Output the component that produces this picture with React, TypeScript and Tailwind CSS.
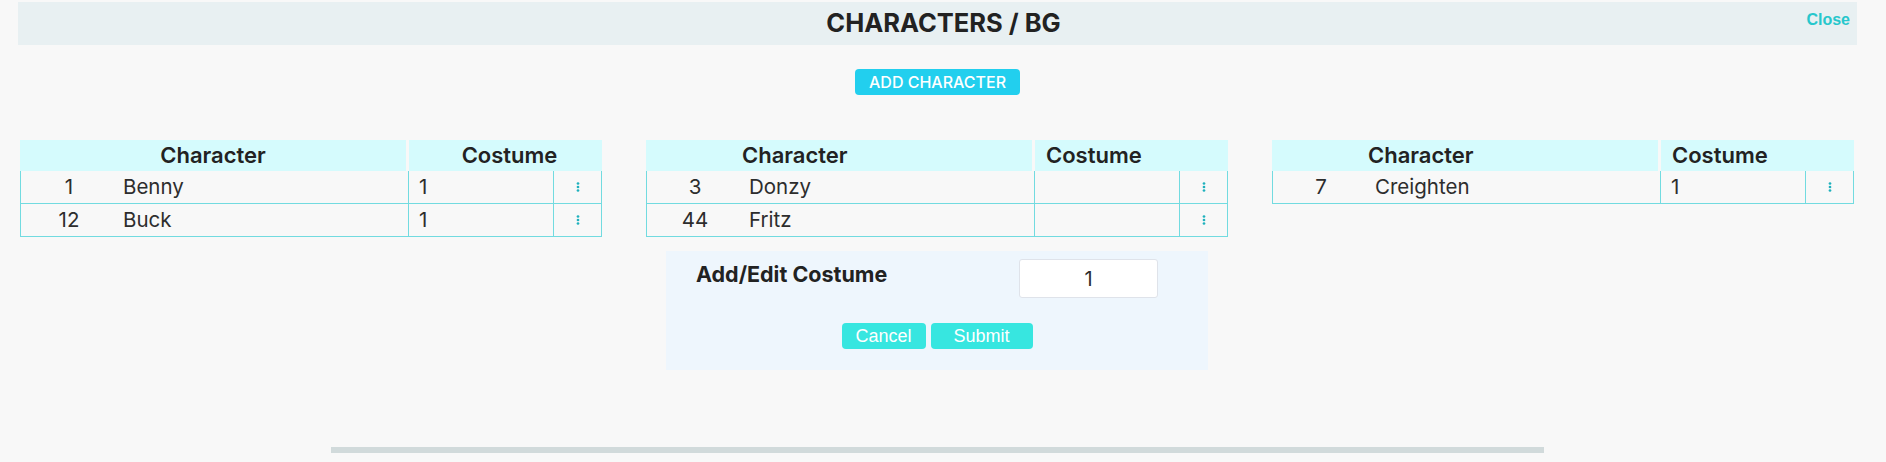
type Row = { num: string; name: string; costume: string }

const tables: { rows: Row[]; centered: boolean }[] = [
  {
    centered: true,
    rows: [
      { num: "1", name: "Benny", costume: "1" },
      { num: "12", name: "Buck", costume: "1" },
    ],
  },
  {
    centered: false,
    rows: [
      { num: "3", name: "Donzy", costume: "" },
      { num: "44", name: "Fritz", costume: "" },
    ],
  },
  {
    centered: false,
    rows: [{ num: "7", name: "Creighten", costume: "1" }],
  },
]

const Dots = () => (
  <svg width="4" height="10" viewBox="0 0 4 10" className="block">
    <circle cx="2" cy="1.5" r="1.35" fill="#1fb1bd" />
    <circle cx="2" cy="5" r="1.35" fill="#1fb1bd" />
    <circle cx="2" cy="8.5" r="1.35" fill="#1fb1bd" />
  </svg>
)

const CharTable = ({ rows, centered }: { rows: Row[]; centered: boolean }) => {
  return (
    <div className="flex flex-col w-[582px]">
      <div className="flex gap-[3px] h-[31px] text-[22px] font-semibold text-[#222]">
        <div
          className={
            centered
              ? "w-[386px] bg-[#d5fbfd] flex items-center justify-center"
              : "w-[386px] bg-[#d5fbfd] flex items-center pl-[96px]"
          }
        >
          Character
        </div>
        <div
          className={
            centered
              ? "flex-1 bg-[#d5fbfd] flex items-center justify-center pl-[8px]"
              : "flex-1 bg-[#d5fbfd] flex items-center pl-[11px]"
          }
        >
          Costume
        </div>
      </div>
      {rows.map((r) => (
        <div
          key={r.num}
          className="flex h-[33px] border-x border-b border-[#72dbe0] text-[20.5px] text-[#2d2d2d]"
        >
          <div className="w-[96px] flex items-center justify-center">{r.num}</div>
          <div className="w-[291px] flex items-center pl-[6px]">{r.name}</div>
          <div className="w-[145px] border-l border-[#72dbe0] flex items-center pl-[10px]">
            {r.costume}
          </div>
          <div className="flex-1 border-l border-[#72dbe0] flex items-center justify-center">
            <Dots />
          </div>
        </div>
      ))}
    </div>
  )
}

const CostumePanel = () => {
  return (
    <div className="mx-[20px] mt-[14px] bg-[#eef6fd] flex flex-col pt-[8px] pb-[21px]">
      <div className="flex justify-between items-start pl-[30px] pr-[50px]">
        <span className="text-[21.5px] font-bold text-[#222] leading-[28px] mt-[1px]">
          Add/Edit Costume
        </span>
        <input
          defaultValue="1"
          className="w-[139px] h-[39px] bg-white border border-[#dfe3ea] rounded-[3px] text-center text-[20px] text-[#2d2d2d] outline-none"
        />
      </div>
      <div className="flex justify-center gap-[5px] mt-[25px] font-['Liberation_Sans',Arial,sans-serif] text-[18px] text-white">
        <button className="w-[84px] h-[26px] rounded-[4px] bg-[#37e6e0]">Cancel</button>
        <button className="w-[102px] h-[26px] rounded-[4px] bg-[#37e6e0]">Submit</button>
      </div>
    </div>
  )
}

export default function App() {
  return (
    <div className="min-h-screen bg-[#f8f8f8] font-['Inter','Noto_Sans',sans-serif] pt-[2px] pl-[18px] pr-[29px]">
      <div className="grid grid-cols-[1fr_auto_1fr] h-[43px] bg-[#e8f0f2]">
        <div />
        <h1 className="self-center pl-[12px] text-[25.5px] font-bold text-[#222]">
          CHARACTERS / BG
        </h1>
        <button className="justify-self-end self-start mt-[6px] mr-[7px] font-['Liberation_Sans',Arial,sans-serif] font-bold text-[16px] text-[#27c7cc]">
          Close
        </button>
      </div>

      <div className="flex justify-center mt-[24px]">
        <button className="w-[165px] h-[26px] rounded-[4px] bg-[#22cfee] text-white text-[16px] font-medium">
          ADD CHARACTER
        </button>
      </div>

      <div className="flex items-start gap-[44px] pl-[2px] mt-[45px]">
        {tables.map((t, i) => (
          <div key={i} className="flex flex-col">
            <CharTable rows={t.rows} centered={t.centered} />
            {i === 1 && <CostumePanel />}
          </div>
        ))}
      </div>

      <div className="flex justify-center mt-[77px]">
        <div className="w-[1213px] h-[6px] bg-[#d1dadb]" />
      </div>
    </div>
  )
}
